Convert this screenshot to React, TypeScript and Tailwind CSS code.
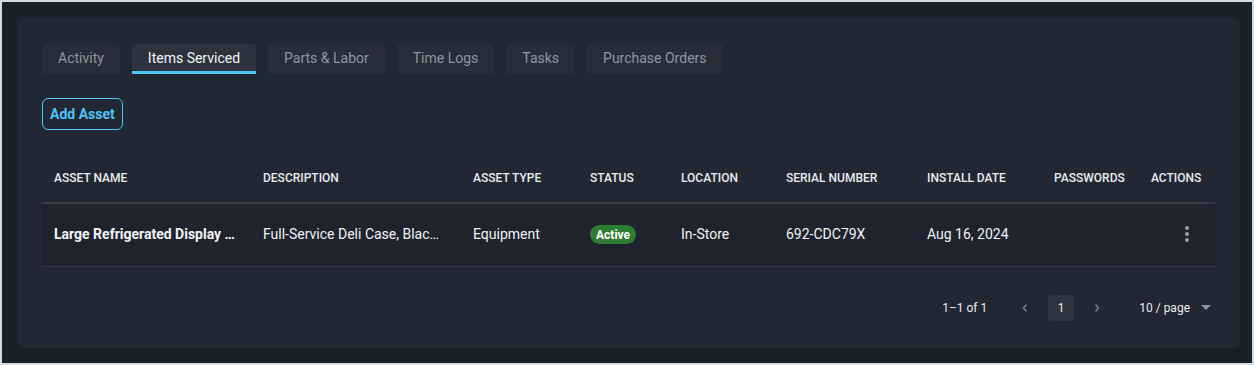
import React from "react";

const tabs = ["Activity", "Items Serviced", "Parts & Labor", "Time Logs", "Tasks", "Purchase Orders"];

const cols = [
  { label: "ASSET NAME", w: "w-[209px]" },
  { label: "DESCRIPTION", w: "w-[210px]" },
  { label: "ASSET TYPE", w: "w-[117px]" },
  { label: "STATUS", w: "w-[91px]" },
  { label: "LOCATION", w: "w-[105px]" },
  { label: "SERIAL NUMBER", w: "w-[141px]" },
  { label: "INSTALL DATE", w: "w-[127px]" },
  { label: "PASSWORDS", w: "w-[97px]" },
  { label: "ACTIONS", w: "w-[76px]" },
];

export default function App() {
  return (
    <div className="w-[1254px] h-[365px] bg-[#d3dbe3] p-[2px]" style={{ fontFamily: "Roboto, 'Noto Sans', sans-serif" }}>
      <div className="w-full h-full bg-[#19202a] pt-[16px] pl-[15px] pr-[12px]">
        <div className="h-[330px] rounded-[6px] bg-[#212733] pt-[26px] px-[25px]">
          <div className="flex gap-[12px]">
            {tabs.map((t) => {
              const active = t === "Items Serviced";
              return (
                <div
                  key={t}
                  className={
                    active
                      ? "h-[30px] px-[16px] rounded-t-[4px] bg-[#2d333e] text-[#f1f3f5] text-[14px] flex items-center border-b-[3px] border-[#4fc3f7] pt-[1px]"
                      : "h-[30px] px-[16px] pb-[2px] rounded-[4px] bg-[#282e39] text-[#8c96a2] text-[14px] flex items-center"
                  }
                >
                  {t}
                </div>
              );
            })}
          </div>
          <div className="mt-[24px]">
            <button className="h-[32px] px-[7px] rounded-[6px] border border-[#4fc3f7] text-[#4fc3f7] text-[14px] font-bold">
              Add Asset
            </button>
          </div>
          <div className="mt-[24px] w-[1173px]">
            <div className="flex h-[50px] items-center border-b-[2px] border-[#363c47]">
              {cols.map((c) => (
                <div key={c.label} className={`${c.w} px-[12px] text-[12px] font-medium text-[#e9ecef] whitespace-nowrap`}>
                  {c.label}
                </div>
              ))}
            </div>
            <div className="flex h-[63px] pb-[2px] items-center bg-[#1e232d] border-b border-[#363c47] text-[14px] text-[#f1f3f5]">
              <div className="w-[209px] px-[12px] font-bold truncate">Large Refrigerated Display Case</div>
              <div className="w-[210px] pl-[12px] pr-[18px] truncate">Full-Service Deli Case, Black Trim</div>
              <div className="w-[117px] px-[12px]">Equipment</div>
              <div className="w-[91px] px-[12px]">
                <span className="inline-flex items-center h-[19px] px-[6px] rounded-full bg-[#2e7d32] text-white text-[12px] font-bold">Active</span>
              </div>
              <div className="w-[105px] px-[12px]">In-Store</div>
              <div className="w-[141px] px-[12px]">692-CDC79X</div>
              <div className="w-[127px] px-[12px]">Aug 16, 2024</div>
              <div className="w-[97px] px-[12px]"></div>
              <div className="w-[76px] px-[12px] flex justify-center">
                <svg width="4" height="16" viewBox="0 0 4 16" className="ml-[20px]">
                  <circle cx="2" cy="2" r="2" fill="#9aa0a6" />
                  <circle cx="2" cy="8" r="2" fill="#9aa0a6" />
                  <circle cx="2" cy="14" r="2" fill="#9aa0a6" />
                </svg>
              </div>
            </div>
            <div className="flex items-center justify-end h-[26px] mt-[28px] text-[12px] text-[#e9ecef]">
              <span>1–1 of 1</span>
              <svg width="8" height="10" viewBox="0 0 8 10" className="ml-[34px]">
                <path d="M5.5 1.5 L2.5 5 L5.5 8.5" stroke="#7b838e" strokeWidth="1.4" fill="none" />
              </svg>
              <div className="ml-[19px] w-[26px] h-[26px] rounded-[3px] bg-[#2f3540] flex items-center justify-center">1</div>
              <svg width="8" height="10" viewBox="0 0 8 10" className="ml-[19px]">
                <path d="M2.5 1.5 L5.5 5 L2.5 8.5" stroke="#7b838e" strokeWidth="1.4" fill="none" />
              </svg>
              <span className="ml-[38px]">10 / page</span>
              <svg width="10" height="6" viewBox="0 0 10 6" className="ml-[11px] mr-[4px]">
                <path d="M0 0 L10 0 L5 5 Z" fill="#8c939c" />
              </svg>
            </div>
          </div>
        </div>
      </div>
    </div>
  );
}
